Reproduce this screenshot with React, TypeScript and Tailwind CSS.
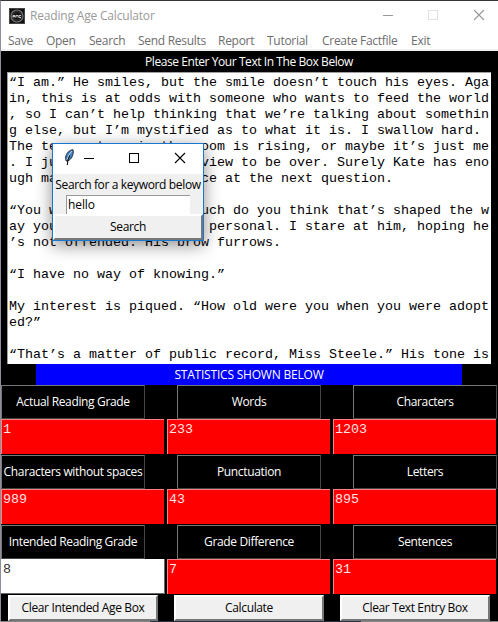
const story = [
  '“I am.” He smiles, but the smile doesn’t touch his eyes. Aga',
  'in, this is at odds with someone who wants to feed the world',
  ', so I can’t help thinking that we’re talking about somethin',
  'g else, but I’m mystified as to what it is. I swallow hard.',
  'The temperature in the room is rising, or maybe it’s just me',
  '. I just want this interview to be over. Surely Kate has eno',
  'ugh material now? I glance at the next question.',
  '',
  '“You were adopted. How much do you think that’s shaped the w',
  'ay you are? This is very personal. I stare at him, hoping he',
  '’s not offended. His brow furrows.',
  '',
  '“I have no way of knowing.”',
  '',
  'My interest is piqued. “How old were you when you were adopt',
  'ed?”',
  '',
  '“That’s a matter of public record, Miss Steele.” His tone is',
].join('\n');

const mono = "font-['Liberation_Mono',monospace] text-[13.333px] leading-4";

const menu = [
  { name: 'Save', width: 'w-[38px]' },
  { name: 'Open', width: 'w-[43px]' },
  { name: 'Search', width: 'w-[49px]' },
  { name: 'Send Results', width: 'w-[80px]' },
  { name: 'Report', width: 'w-[49px]' },
  { name: 'Tutorial', width: 'w-[55px]' },
  { name: 'Create Factfile', width: 'w-[89px]' },
  { name: 'Exit', width: 'w-[40px]' },
];

const stats = [
  [
    { label: 'Actual Reading Grade', value: '1' },
    { label: 'Words', value: '233' },
    { label: 'Characters', value: '1203' },
  ],
  [
    { label: 'Characters without spaces', value: '989' },
    { label: 'Punctuation', value: '43' },
    { label: 'Letters', value: '895' },
  ],
  [
    { label: 'Intended Reading Grade', value: '8', editable: true },
    { label: 'Grade Difference', value: '7' },
    { label: 'Sentences', value: '31' },
  ],
];

function AppIcon() {
  return (
    <svg width="16" height="16" viewBox="0 0 16 16">
      <rect width="16" height="16" fill="#101010" />
      <rect x="0.5" y="0.5" width="15" height="15" fill="none" stroke="#444" />
      <circle cx="8" cy="8" r="6" fill="#151515" stroke="#777" strokeWidth="1.2" />
      <circle cx="8" cy="8" r="4.3" fill="none" stroke="#393939" />
      <path d="M4 9.500V7.500h2v2M4 8.500h2M7 9.500v-2h2v2M12 7.500h-2v2h2" fill="none" stroke="#c4c4c4" strokeWidth="1" />
    </svg>
  );
}

function Feather() {
  return (
    <svg width="11" height="17" viewBox="0 0 11 17">
      <path d="M2.2 12C.8 8.5 2 4.5 5.2 2.2 6.700 1 8.500.5 9 .8c.7 1.700.2 5.200-1.500 8C6.300 10.700 4.500 12 2.200 12Z" fill="#4484c4" stroke="#25282e" strokeWidth="1" />
      <path d="M7.800 2.200C5.500 4.500 4 7.500 3 11" fill="none" stroke="#b9d8f4" strokeWidth="1" />
      <path d="M5.800 6.500C4 9.500 3.400 12 3.300 16" fill="none" stroke="#111" strokeWidth="1.100" />
    </svg>
  );
}

function WindowButtons({ dialog = false }: { dialog?: boolean }) {
  return (
    <svg width="103" height="12" viewBox="0 0 103 12" fill="none" stroke={dialog ? '#000' : '#999'} shapeRendering="crispEdges">
      <path d="M1 6.500h10" />
      <rect x="46.500" y="1.500" width="9" height="9" stroke={dialog ? '#000' : '#e2e2e2'} />
      <path d="M92 1l10 10M102 1L92 11" shapeRendering="auto" strokeWidth="1.100" />
    </svg>
  );
}

function RaisedButton({ children, className }: { children: string; className: string }) {
  return (
    <button className={`flex items-center justify-center border-2 border-t-white border-l-white border-r-[#777] border-b-[#777] bg-[#f0f0f0] text-black ${className}`}>
      {children}
    </button>
  );
}

function SearchDialog() {
  return (
    <div className="absolute top-[142px] left-[51px] flex h-[98px] w-[152px] flex-col border border-[#1878cf] bg-[#f0f0f0] shadow-[0_4px_16px_rgba(0,0,0,0.45)]">
      <div className="flex h-[30px] shrink-0 bg-white pl-[11px]">
        <div className="mt-[5px] w-[19px]"><Feather /></div>
        <div className="mt-2"><WindowButtons dialog /></div>
      </div>
      <div className="flex h-[21px] shrink-0 items-center justify-center whitespace-nowrap text-black">
        <span className="tracking-[-0.36px]">Search for a keyword below</span>
      </div>
      <div className="mx-auto flex h-[19px] w-[124px] shrink-0 items-center border-t border-l border-t-[#999] border-l-[#999] bg-white pl-px text-black">
        <span className="tracking-[-0.1px]">hello</span>
      </div>
      <RaisedButton className="h-[26px] w-[150px] tracking-[-0.35px]">Search</RaisedButton>
    </div>
  );
}

export default function App() {
  return (
    <div className="relative flex h-[622px] w-[498px] flex-col overflow-hidden border-t border-l border-t-[#353535] border-l-[#8b909b] bg-black font-['Open_Sans','Noto_Sans',sans-serif] text-xs leading-4">
      <header className="flex h-[29px] shrink-0 items-center bg-white pl-2 text-[#999]">
        <AppIcon />
        <span className="ml-[5px] w-[352px] whitespace-nowrap tracking-[-0.18px]">Reading Age Calculator</span>
        <span className="-mt-px pr-[7px]"><WindowButtons /></span>
      </header>
      <nav className="flex h-[21px] shrink-0 items-center border-b-2 border-[#f0f0f0] bg-white pt-[2px] pl-[7px] tracking-[-0.28px] text-[#6d6d6d]">
        {menu.map(item => <span key={item.name} className={`whitespace-nowrap ${item.width}`}>{item.name}</span>)}
      </nav>
      <div className="flex h-[21px] shrink-0 items-center justify-center pr-px tracking-[-0.43px] text-white">Please Enter Your Text In The Box Below</div>
      <div className={`ml-[6px] h-[292px] w-[484px] shrink-0 overflow-hidden border-t border-l border-[#a0a0a0] bg-white pt-[2px] pl-px whitespace-pre text-black ${mono}`}>{story}</div>
      <div className="ml-[35px] flex h-[21px] w-[426px] shrink-0 items-center justify-center bg-[#0000ff] tracking-[-0.2px] text-white">STATISTICS SHOWN BELOW</div>
      {stats.map((row, index) => (
        <section key={index} className="h-[70px] shrink-0">
          <div className="flex gap-8">
            {row.map(item => (
              <div key={item.label} className="flex h-[34px] w-36 items-center justify-center border border-t-[#777] border-l-[#777] border-r-[#444] border-b-[#444] tracking-[-0.35px] whitespace-nowrap text-white">{item.label}</div>
            ))}
          </div>
          <div className="flex gap-[3px]">
            {row.map(item => (
              <div key={item.label} className={`h-[35px] ${mono} ${item.editable ? '-mr-px w-[164px] border-r border-b border-[#666] bg-white pt-[3px] pl-[2px] text-[#333]' : 'w-[163px] border-t border-l border-[#ff8080] bg-[#ff0000] pt-[2px] pl-px text-[#ffe5e5]'}`}>{item.value}</div>
            ))}
          </div>
        </section>
      ))}
      <footer className="flex h-[26px] shrink-0 gap-4 pl-[7px] tracking-[-0.36px]">
        <RaisedButton className="h-[26px] w-[150px]">Clear Intended Age Box</RaisedButton>
        <RaisedButton className="h-[26px] w-[150px]">Calculate</RaisedButton>
        <RaisedButton className="h-[26px] w-[150px]">Clear Text Entry Box</RaisedButton>
      </footer>
      <div className="flex h-px shrink-0 bg-[#858585]"><div className="ml-[149px] w-[211px] bg-[#263343]" /></div>
      <SearchDialog />
    </div>
  );
}
